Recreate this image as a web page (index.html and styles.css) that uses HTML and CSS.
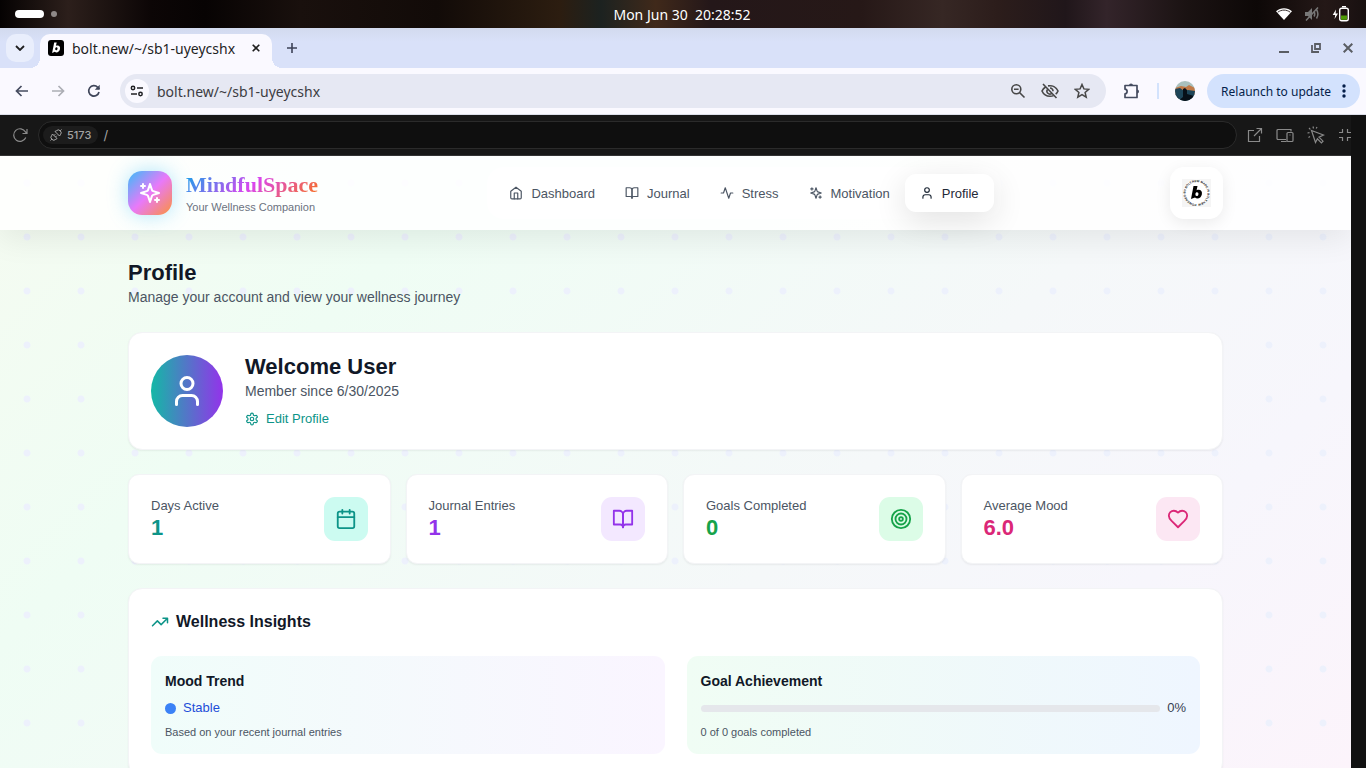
FILE: index.html
```html
<!DOCTYPE html>
<html lang="en">
<head>
<meta charset="utf-8">
<meta name="viewport" content="width=device-width, initial-scale=1">
<title>MindfulSpace - Profile</title>
<link rel="stylesheet" href="styles.css">
</head>
<body class="desktop">
<svg class="sprite" aria-hidden="true">
  <symbol id="user" viewBox="0 0 24 24"><path d="M19 21v-2a4 4 0 0 0-4-4H9a4 4 0 0 0-4 4v2"/><circle cx="12" cy="7" r="4"/></symbol>
  <symbol id="book" viewBox="0 0 24 24"><path d="M2 3h6a4 4 0 0 1 4 4v14a3 3 0 0 0-3-3H2z"/><path d="M22 3h-6a4 4 0 0 0-4 4v14a3 3 0 0 1 3-3h7z"/></symbol>
  <symbol id="sparkles" viewBox="0 0 24 24"><path d="m12 3-1.912 5.813a2 2 0 0 1-1.275 1.275L3 12l5.813 1.912a2 2 0 0 1 1.275 1.275L12 21l1.912-5.813a2 2 0 0 1 1.275-1.275L21 12l-5.813-1.912a2 2 0 0 1-1.275-1.275L12 3Z"/><path d="M5 3v4M19 17v4M3 5h4M17 19h4"/></symbol>
</svg>

<div class="system-bar">
  <div class="workspaces"><span class="workspace-active"></span><span class="workspace-dot"></span></div>
  <time class="clock">Mon Jun 30&nbsp; 20:28:52</time>
  <div class="tray">
    <svg width="16" height="14" viewBox="0 0 16 14"><path d="M0 4.200C4.500.1 11.500.1 16 4.200L8 13z" fill="#fff"/><path d="M1.800 5.200C5.500 2.400 10.500 2.400 14.200 5.200" fill="none" stroke="#3a3030" stroke-width="1"/></svg>
    <svg width="16" height="16" viewBox="0 0 16 16"><path d="M1 6h3l4-4v12l-4-4H1z" fill="#777"/><path d="M10 5.500q1.500 2.500 0 5M12.500 3.500q2.800 4.500 0 9M14 1.500L2 14.500" fill="none" stroke="#777" stroke-width="1.500"/></svg>
    <svg width="17" height="16" viewBox="0 0 17 16"><path d="M4 3.500L.7 9h2.500L2.600 13 6 7.500H3.600z" fill="#fff"/><rect x="7.700" y="2.200" width="8.600" height="12.600" rx="2" fill="none" stroke="#fff" stroke-width="1.400"/><path d="M10 .7h4" stroke="#fff" stroke-width="1.400"/><rect x="9" y="9.500" width="6" height="4.300" fill="#4e9a06"/></svg>
  </div>
</div>

<div class="tab-strip">
  <button class="tab-search" aria-label="Search tabs"><svg width="10" height="6" viewBox="0 0 10 6"><path d="M1 1l4 4 4-4" fill="none" stroke="#1f1f1f" stroke-width="1.800"/></svg></button>
  <div class="tab">
    <svg class="favicon" width="16" height="16" viewBox="0 0 16 16"><rect width="16" height="16" rx="3" fill="#000"/><path d="M6.200 2.500h2.500l-.8 3.300C10.500 4.800 12.600 6 12 9c-.6 3.200-3.600 4.400-5.200 2.800l-2.700 1.300zM7.300 8.200c-.6 2.400 1.800 2.500 2.200.7.400-2-1.700-2.300-2.200-.7z" fill="#fff" fill-rule="evenodd"/></svg>
    <span class="tab-title">bolt.new/~/sb1-uyeycshx</span>
    <button class="tab-close" aria-label="Close tab"><svg width="8" height="8" viewBox="0 0 8 8"><path d="M.7.7l6.600 6.600M7.300.7L.7 7.300" stroke="#1f1f1f" stroke-width="1.600"/></svg></button>
  </div>
  <button class="new-tab" aria-label="New tab"><svg width="10" height="10" viewBox="0 0 10 10"><path d="M5 0v10M0 5h10" stroke="#3c4257" stroke-width="1.600"/></svg></button>
  <div class="window-controls">
    <button aria-label="Minimize"><svg width="10" height="10" viewBox="0 0 10 10"><path d="M0 9h10" stroke="#5a5d63" stroke-width="2"/></svg></button>
    <button aria-label="Restore"><svg width="10" height="10" viewBox="0 0 10 10"><path d="M4 1h5v5H4zM1 2v7h7" fill="none" stroke="#5a5d63" stroke-width="1.800"/></svg></button>
    <button aria-label="Close"><svg width="10" height="10" viewBox="0 0 10 10"><path d="M.7.7l8.600 8.600M9.300.7L.7 9.300" stroke="#5a5d63" stroke-width="2"/></svg></button>
  </div>
</div>

<div class="browser-bar">
  <div class="history">
    <button aria-label="Back"><svg width="14" height="12" viewBox="0 0 14 12"><path d="M13 6H1.500M6.500 1L1.500 6l5 5" fill="none" stroke="#454c60" stroke-width="1.700"/></svg></button>
    <button aria-label="Forward" disabled><svg width="14" height="12" viewBox="0 0 14 12"><path d="M1 6h11.500M7.500 1l5 5-5 5" fill="none" stroke="#acaeb5" stroke-width="1.700"/></svg></button>
    <button aria-label="Reload"><svg width="14" height="14" viewBox="0 0 14 14"><path d="M12 8a5.200 5.200 0 1 1-1.300-4.700L12.400 5" fill="none" stroke="#3f465a" stroke-width="1.700"/><path d="M12.700.8v4.900H7.800z" fill="#3f465a"/></svg></button>
  </div>
  <div class="omnibox">
    <button class="site-info" aria-label="Site information"><svg width="14" height="12" viewBox="0 0 14 12"><g fill="none" stroke="#202124" stroke-width="1.500"><circle cx="3" cy="3" r="1.700"/><path d="M7 3h6"/><circle cx="10.500" cy="9" r="1.700"/><path d="M1 9h6"/></g></svg></button>
    <input class="address" aria-label="Address" value="bolt.new/~/sb1-uyeycshx">
    <button aria-label="Zoom"><svg width="16" height="16" viewBox="0 0 16 16"><g fill="none" stroke="#474747" stroke-width="1.600"><circle cx="6.300" cy="6.300" r="4.500"/><path d="M9.500 9.500l5 5M4 6.300h4.600"/></g></svg></button>
    <button aria-label="Third-party cookies blocked"><svg width="18" height="16" viewBox="0 0 18 16"><g fill="none" stroke="#474747" stroke-width="1.600"><path d="M5 3.700C3.100 4.700 1.700 6.300 1 8c1.400 3.200 4.400 5.300 8 5.300 1.300 0 2.500-.2 3.500-.7M7 2.900c4.300-.9 8.300 1.300 10 5.100a9 9 0 0 1-2.300 3.200"/><path d="M2 1l13.500 14M6.300 6.600A3 3 0 0 0 10.500 10.600M9 5a3 3 0 0 1 3 3.200"/></g></svg></button>
    <button aria-label="Bookmark"><svg width="16" height="16" viewBox="0 0 16 16"><path d="M8 1.500l1.900 4.400 4.800.4-3.600 3.200 1.100 4.700L8 11.700l-4.200 2.500 1.100-4.700L1.300 6.300l4.800-.4z" fill="none" stroke="#474747" stroke-width="1.500"/></svg></button>
  </div>
  <button class="extensions" aria-label="Extensions"><svg width="18" height="18" viewBox="0 0 18 18"><path d="M2 3.500h12v12H2v-3.600c2.800-.2 2.800-4.500 0-4.700z" fill="none" stroke="#454c60" stroke-width="1.700" stroke-linejoin="round"/><path d="M6 3.500a2 2 0 0 1 4 0zM14 7.500a2 2 0 0 1 0 4z" fill="#454c60"/></svg></button>
  <span class="divider"></span>
  <button class="profile-photo" aria-label="Browser profile"><svg width="20" height="20" viewBox="0 0 20 20"><defs><clipPath id="round"><circle cx="10" cy="10" r="10"/></clipPath></defs><g clip-path="url(#round)"><path fill="#a9c0bd" d="M0 0h20v20H0z"/><path fill="#c07a48" d="M0 7l6-2 5 1 3-2 6 3v7H0z"/><path fill="#1d4558" d="M0 8l5-1 4 3 4-1 7 1v10H0z"/><path fill="#071018" d="M8 8l2-1 2 2v4l7 2v5H3l5-4zM0 13l6 7H0z"/></g></svg></button>
  <button class="relaunch"><span>Relaunch to update</span><svg width="4" height="14" viewBox="0 0 4 14"><g fill="#041e49"><circle cx="2" cy="2" r="1.700"/><circle cx="2" cy="7" r="1.700"/><circle cx="2" cy="12" r="1.700"/></g></svg></button>
</div>

<div class="workbench">
<div class="preview">
  <div class="preview-bar">
    <button aria-label="Reload preview"><svg width="16" height="16" viewBox="0 0 16 16"><path d="M13.800 10.500A6.300 6.300 0 1 1 13.500 5L15 6.300M15 2v4.500h-4.500" class="thin"/></svg></button>
    <div class="preview-address">
      <button class="port"><svg width="12" height="12" viewBox="0 0 12 12"><path d="M2.500 5L7 9.500 5.800 10.300a2.800 2.800 0 0 1-4-4zM5 2.500L9.500 7l.8-1.200a2.800 2.800 0 0 0-4-4zM1.800 10.200L.5 11.500M10.200 1.800L11.500.5M4 6.500l1.300-1.300M5.500 8l1.300-1.300" fill="none" stroke="#aaa" stroke-width="1"/></svg>5173</button>
      <input class="path" aria-label="Preview path" value="/">
    </div>
    <div class="preview-tools">
      <button aria-label="Open in new tab"><svg width="16" height="16" viewBox="0 0 16 16"><path class="thin" d="M7 3.500H1.500v11h11V9M9.500 1.500h5v5M14.500 1.500L7 9"/></svg></button>
      <button aria-label="Device preview"><svg width="18" height="16" viewBox="0 0 18 16"><path class="thin" d="M10 12.500H2a1 1 0 0 1-1-1v-8a1 1 0 0 1 1-1h13v2M5 14.500h5.500M12 5.500h4a1 1 0 0 1 1 1v7a1 1 0 0 1-1 1h-4a1 1 0 0 1-1-1v-7a1 1 0 0 1 1-1zM13.500 8h1"/></svg></button>
      <button aria-label="Inspect element"><svg width="18" height="18" viewBox="0 0 18 18"><path class="thin" d="M4.500 4.500l12 4.500-4.500 2.200 4 4-1.600 1.600-4-4L8.500 16.500zM6 .5l.5 2M.5 7l2-.4M2 2l1.300 1.300M10 1l-.8 1.600M1.500 11.500l1.500-.9"/></svg></button>
      <button aria-label="Exit fullscreen"><svg width="14" height="14" viewBox="0 0 14 14"><path class="thin" d="M4.500 1v3.500H1M9.500 1v3.500H13M4.500 13V9.500H1M9.500 13V9.500H13"/></svg></button>
    </div>
  </div>

  <div class="app">
    <header class="app-header">
      <div class="container header-row">
        <a class="brand" href="#">
          <span class="brand-mark"><svg class="icon" width="24" height="24"><use href="#sparkles"/></svg></span>
          <span class="brand-text"><span class="brand-name">MindfulSpace</span><span class="brand-tag">Your Wellness Companion</span></span>
        </a>
        <nav class="nav">
          <button class="nav-item"><svg class="icon" width="14" height="14" viewBox="0 0 24 24"><path d="m3 9 9-7 9 7v11a2 2 0 0 1-2 2H5a2 2 0 0 1-2-2z"/><path d="M9 22V12h6v10"/></svg>Dashboard</button>
          <button class="nav-item"><svg class="icon" width="14" height="14"><use href="#book"/></svg>Journal</button>
          <button class="nav-item"><svg class="icon" width="14" height="14" viewBox="0 0 24 24"><path d="M22 12h-4l-3 9L9 3l-3 9H2"/></svg>Stress</button>
          <button class="nav-item"><svg class="icon" width="14" height="14"><use href="#sparkles"/></svg>Motivation</button>
          <button class="nav-item nav-active" aria-current="page"><svg class="icon" width="14" height="14"><use href="#user"/></svg>Profile</button>
        </nav>
        <a class="badge" href="#" aria-label="Powered by Bolt.new">
          <svg width="29" height="28" viewBox="0 0 29 28"><rect width="29" height="28" fill="#f5f5f5"/><circle cx="14.500" cy="14" r="13.500" fill="#fff"/><path id="ring" d="M14.500 25a11 11 0 1 1 .1 0" fill="none"/><text class="ring-text"><textPath href="#ring">POWERED BY BOLT.NEW MADE IN BOLT.NEW</textPath></text><path d="M11.500 7h4l-.9 4.200c3-1.400 6 .2 5.300 4-.7 4-4.700 5.400-6.900 3.200L9 20zM13.500 14.500c-.7 3.100 2.400 3.200 2.900.9.500-2.500-2.300-3.100-2.900-.9z" fill="#000" fill-rule="evenodd"/></svg>
        </a>
      </div>
    </header>

    <main class="container main">
      <div class="page-head">
        <h1>Profile</h1>
        <p>Manage your account and view your wellness journey</p>
      </div>

      <section class="card member">
        <div class="avatar"><svg class="icon" width="36" height="36"><use href="#user"/></svg></div>
        <div class="member-text">
          <h2>Welcome User</h2>
          <p>Member since 6/30/2025</p>
          <button class="edit"><svg class="icon" width="14" height="14" viewBox="0 0 24 24"><path d="M12.220 2h-.44a2 2 0 0 0-2 2v.18a2 2 0 0 1-1 1.730l-.43.25a2 2 0 0 1-2 0l-.15-.08a2 2 0 0 0-2.730.73l-.22.38a2 2 0 0 0 .73 2.730l.15.1a2 2 0 0 1 1 1.720v.51a2 2 0 0 1-1 1.740l-.15.09a2 2 0 0 0-.73 2.730l.22.38a2 2 0 0 0 2.730.73l.15-.08a2 2 0 0 1 2 0l.43.25a2 2 0 0 1 1 1.730V20a2 2 0 0 0 2 2h.44a2 2 0 0 0 2-2v-.18a2 2 0 0 1 1-1.730l.43-.25a2 2 0 0 1 2 0l.15.08a2 2 0 0 0 2.730-.73l.22-.39a2 2 0 0 0-.73-2.730l-.15-.08a2 2 0 0 1-1-1.740v-.5a2 2 0 0 1 1-1.740l.15-.09a2 2 0 0 0 .73-2.730l-.22-.38a2 2 0 0 0-2.730-.73l-.15.08a2 2 0 0 1-2 0l-.43-.25a2 2 0 0 1-1-1.730V4a2 2 0 0 0-2-2z"/><circle cx="12" cy="12" r="3"/></svg>Edit Profile</button>
        </div>
      </section>

      <section class="stats">
        <div class="card stat teal"><div><p>Days Active</p><strong>1</strong></div><span class="stat-icon"><svg class="icon" width="22" height="22" viewBox="0 0 24 24"><rect x="3" y="4" width="18" height="18" rx="2"/><path d="M16 2v4M8 2v4M3 10h18"/></svg></span></div>
        <div class="card stat purple"><div><p>Journal Entries</p><strong>1</strong></div><span class="stat-icon"><svg class="icon" width="22" height="22"><use href="#book"/></svg></span></div>
        <div class="card stat green"><div><p>Goals Completed</p><strong>0</strong></div><span class="stat-icon"><svg class="icon" width="22" height="22" viewBox="0 0 24 24"><circle cx="12" cy="12" r="10"/><circle cx="12" cy="12" r="6"/><circle cx="12" cy="12" r="2"/></svg></span></div>
        <div class="card stat pink"><div><p>Average Mood</p><strong>6.0</strong></div><span class="stat-icon"><svg class="icon" width="22" height="22" viewBox="0 0 24 24"><path d="M19 14c1.490-1.460 3-3.210 3-5.500A5.500 5.500 0 0 0 16.500 3c-1.760 0-3 .5-4.500 2-1.500-1.500-2.740-2-4.500-2A5.500 5.500 0 0 0 2 8.500c0 2.300 1.500 4.050 3 5.500l7 7Z"/></svg></span></div>
      </section>

      <section class="card insights">
        <h3><svg class="icon" width="18" height="18" viewBox="0 0 24 24"><path d="M22 7l-8.500 8.500-5-5L2 17M16 7h6v6"/></svg>Wellness Insights</h3>
        <div class="panels">
          <div class="panel mood">
            <h4>Mood Trend</h4>
            <div class="panel-row trend"><span class="trend-dot"></span>Stable</div>
            <p>Based on your recent journal entries</p>
          </div>
          <div class="panel goals">
            <h4 id="goal-title">Goal Achievement</h4>
            <div class="panel-row"><progress value="0" max="100" aria-labelledby="goal-title"></progress><span>0%</span></div>
            <p>0 of 0 goals completed</p>
          </div>
        </div>
      </section>
    </main>
  </div>
</div>
</div>
</body>
</html>
```
FILE: styles.css
```css
* { box-sizing: border-box; }
h1, h2, h3, h4, p { margin: 0; }
button {
  border: 0;
  padding: 0;
  background: none;
  color: inherit;
  font: inherit;
  display: flex;
  align-items: center;
  justify-content: center;
}
input { border: 0; padding: 0; background: none; color: inherit; font: inherit; min-width: 0; }
a { color: inherit; text-decoration: none; }
svg { display: block; flex: none; }

.desktop {
  margin: 0;
  height: 100vh;
  display: flex;
  flex-direction: column;
  overflow: hidden;
  font-family: "Liberation Sans", Arial, sans-serif;
}
.sprite { display: none; }
.icon { fill: none; stroke: currentColor; stroke-width: 2; stroke-linecap: round; stroke-linejoin: round; }
.thin { fill: none; stroke: #8a8a8a; stroke-width: 1.2; }

/* System bar */
.system-bar {
  flex: none;
  height: 28px;
  padding: 0 17px 0 15px;
  display: grid;
  grid-template-columns: 1fr auto 1fr;
  align-items: center;
  color: #fff;
  font-family: "Noto Sans", sans-serif;
  font-size: 14px;
  background: linear-gradient(90deg, #050202 0, #2c1f1b 5%, #0c0606 11%, #070303 15%, #19100d 22%, #120b08 32%, #2c1d10 41%, #1c2220 44%, #40291a 48%, #241719 52%, #261817 63%, #362724 69%, #2c1d1b 73%, #20161a 78%, #33242a 81%, #1a1212 87%, #0d0807 92%, #241817 97%, #181010);
}
.workspaces { display: flex; align-items: center; gap: 7px; }
.workspace-active { width: 29px; height: 8px; border-radius: 4px; background: #fff; }
.workspace-dot { width: 6px; height: 6px; border-radius: 50%; background: #8f8987; }
.tray { display: flex; justify-content: flex-end; align-items: center; gap: 12px; }

/* Tabs */
.tab-strip {
  flex: none;
  height: 40px;
  padding: 6px 13px 0 6px;
  display: flex;
  align-items: stretch;
  background: linear-gradient(#d2daee, #d9e1f9 14px);
}
.tab-search { width: 28px; height: 28px; border-radius: 10px; background: #e9eefc; }
.tab {
  position: relative;
  margin-left: 6px;
  width: 232px;
  padding: 0 8px 6px;
  display: flex;
  align-items: center;
  gap: 8px;
  border-radius: 10px 10px 0 0;
  background: #faf9ff;
  color: #1f1f1f;
  font: 14px "Noto Sans", sans-serif;
}
.tab::before, .tab::after { content: ""; position: absolute; bottom: 0; width: 10px; height: 10px; }
.tab::before { right: 100%; background: radial-gradient(circle at 0 0, transparent 10px, #faf9ff 10px); }
.tab::after { left: 100%; background: radial-gradient(circle at 100% 0, transparent 10px, #faf9ff 10px); }
.tab-title { flex: 1; white-space: nowrap; }
.tab-close { width: 16px; height: 16px; }
.new-tab { width: 28px; height: 28px; margin-left: 6px; }
.window-controls { margin-left: auto; height: 28px; display: flex; align-items: center; gap: 22px; }

/* Browser toolbar */
.browser-bar {
  flex: none;
  height: 47px;
  padding: 0 6px 0 14px;
  display: flex;
  align-items: center;
  background: #faf9ff;
  border-bottom: 1px solid #dcdfea;
  font-family: "Noto Sans", sans-serif;
}
.history { display: flex; gap: 20px; }
.history button { width: 16px; height: 16px; }
.omnibox {
  flex: 1;
  height: 34px;
  margin-left: 18px;
  padding: 0 16px 0 5px;
  display: flex;
  align-items: center;
  gap: 15px;
  border-radius: 17px;
  background: #e6e8f3;
}
.site-info { width: 24px; height: 24px; border-radius: 50%; background: #faf9ff; }
.address { flex: 1; margin-left: -7px; font-size: 14px; color: #3c3c42; }
.extensions { margin-left: 17px; }
.divider { width: 2px; height: 16px; margin: 0 16px; background: #d3e3fd; }
.relaunch {
  height: 34px;
  margin-left: 12px;
  padding: 0 14px;
  gap: 11px;
  border-radius: 17px;
  background: #d3e2fd;
  color: #041e49;
  font-size: 12px;
}

/* Preview pane */
.workbench { flex: 1; min-height: 0; padding-right: 15px; display: flex; background: #111; }
.preview { flex: 1; min-width: 0; display: flex; flex-direction: column; overflow: hidden; background: #171717; }
.preview-bar {
  flex: none;
  height: 41px;
  padding-left: 12px;
  display: flex;
  align-items: center;
  gap: 10px;
  border-bottom: 1px solid #333;
}
.preview-address {
  flex: 1;
  height: 28px;
  padding: 0 4px;
  display: flex;
  align-items: center;
  gap: 5px;
  border: 1px solid #2b2b2b;
  border-radius: 14px;
  background: #0f0f0f;
  color: #a3a3a3;
}
.port {
  height: 18px;
  padding: 0 7px;
  gap: 5px;
  border-radius: 9px;
  background: #1c1c1c;
  font: 500 11px Inter, sans-serif;
}
.path { flex: 1; font: 13px Inter, sans-serif; }
.preview-tools { display: flex; align-items: center; gap: 13px; margin-right: -1px; }

/* App */
.app {
  flex: 1;
  min-height: 0;
  overflow: auto;
  scrollbar-width: none;
  background:
    radial-gradient(circle, #edf1fc 3px, transparent 4px) 0 0 / 54px 54px,
    linear-gradient(135deg, #f5fbf1 0, #effdf4 25%, #f5f8f9 60%, #f7f6fc 80%, #fcf4fb 100%);
}
.container { width: 100%; max-width: 1153px; margin: 0 auto; padding: 0 29px; }
.app-header {
  position: relative;
  background: rgba(255, 255, 255, 0.85);
  box-shadow: 0 8px 32px rgba(0, 0, 0, 0.08);
}
.header-row { height: 74px; display: flex; align-items: center; justify-content: space-between; }
.brand { display: flex; align-items: center; gap: 14px; }
.brand-mark {
  width: 44px;
  height: 44px;
  display: grid;
  place-items: center;
  border-radius: 14px;
  color: #fff;
  background: linear-gradient(135deg, #38bdf8, #e879f9 50%, #fb923c);
  box-shadow: 0 0 20px rgba(56, 189, 248, 0.4);
}
.brand-text { display: flex; flex-direction: column; }
.brand-name {
  font: bold 22px/28px "Liberation Serif", serif;
  color: transparent;
  background: linear-gradient(135deg, #0ea5e9, #d946ef 50%, #f97316);
  -webkit-background-clip: text;
  background-clip: text;
}
.brand-tag { font-size: 11px; line-height: 16px; color: #6b7280; }
.nav {
  display: flex;
  padding: 7px;
  border-radius: 16px;
  background: rgba(255, 255, 255, 0.7);
}
.nav-item {
  height: 38px;
  padding: 0 15px;
  gap: 8px;
  border-radius: 11px;
  color: #4b5563;
  font-size: 13px;
}
.nav-active { background: #fff; color: #1f2937; box-shadow: 0 8px 32px rgba(0, 0, 0, 0.12); }
.badge {
  width: 53px;
  height: 52px;
  display: grid;
  place-items: center;
  border-radius: 14px;
  background: #fff;
  box-shadow: 0 4px 16px rgba(0, 0, 0, 0.08);
}
.ring-text { font: bold 3px "Liberation Sans", sans-serif; fill: #111; }

.main { padding-top: 29px; padding-bottom: 29px; display: flex; flex-direction: column; gap: 24px; }
.page-head h1 { font-size: 22px; line-height: 27px; color: #111827; }
.page-head p { font-size: 14px; line-height: 22px; color: #4b5563; }
.card {
  background: #fff;
  border: 1px solid #f3f4f6;
  border-radius: 14px;
  box-shadow: 0 1px 2px rgba(0, 0, 0, 0.06);
}
.member { padding: 21px 22px; display: flex; align-items: center; gap: 22px; }
.avatar {
  width: 72px;
  height: 72px;
  display: grid;
  place-items: center;
  border-radius: 50%;
  color: #fff;
  background: linear-gradient(90deg, #14b8a6, #9333ea);
}
.member h2 { font-size: 22px; line-height: 25px; color: #111827; }
.member p { font-size: 14px; line-height: 25px; color: #4b5563; }
.edit { margin-top: 6px; gap: 7px; font-size: 13px; line-height: 18px; color: #0d9488; }

.stats { display: grid; grid-template-columns: repeat(4, 1fr); gap: 15px; }
.stat { padding: 22px; border-radius: 11px; display: flex; align-items: center; justify-content: space-between; }
.stat p { font-size: 13px; line-height: 18px; color: #4b5563; }
.stat strong { display: block; font-size: 22px; line-height: 26px; }
.stat-icon { width: 44px; height: 44px; display: grid; place-items: center; border-radius: 11px; }
.teal strong, .teal .stat-icon { color: #0d9488; }
.teal .stat-icon { background: #ccfbf1; }
.purple strong, .purple .stat-icon { color: #9333ea; }
.purple .stat-icon { background: #f3e8ff; }
.green strong, .green .stat-icon { color: #16a34a; }
.green .stat-icon { background: #dcfce7; }
.pink strong, .pink .stat-icon { color: #db2777; }
.pink .stat-icon { background: #fce7f3; }

.insights { padding: 22px; }
.insights h3 { display: flex; align-items: center; gap: 7px; font-size: 16px; line-height: 22px; color: #111827; }
.insights h3 svg { color: #0d9488; }
.panels { margin-top: 23px; display: grid; grid-template-columns: 1fr 1fr; gap: 22px; }
.panel { padding: 14px; border-radius: 11px; }
.mood { background: linear-gradient(90deg, #f0fdfa, #faf5ff); }
.goals { background: linear-gradient(90deg, #f0fdf4, #eff6ff); }
.panel h4 { font-size: 14px; line-height: 22px; color: #111827; }
.panel-row { margin: 7px 0; display: flex; align-items: center; gap: 7px; font-size: 13px; line-height: 18px; color: #374151; }
.panel p { font-size: 11px; line-height: 16px; color: #4b5563; }
.trend { color: #1d4ed8; }
.trend-dot { width: 11px; height: 11px; border-radius: 50%; background: #3b82f6; }
progress { flex: 1; min-width: 0; height: 7px; appearance: none; border: 0; border-radius: 4px; overflow: hidden; background: #e5e7eb; }
progress::-webkit-progress-bar { background: #e5e7eb; }
progress::-webkit-progress-value { background: #16a34a; }
```
